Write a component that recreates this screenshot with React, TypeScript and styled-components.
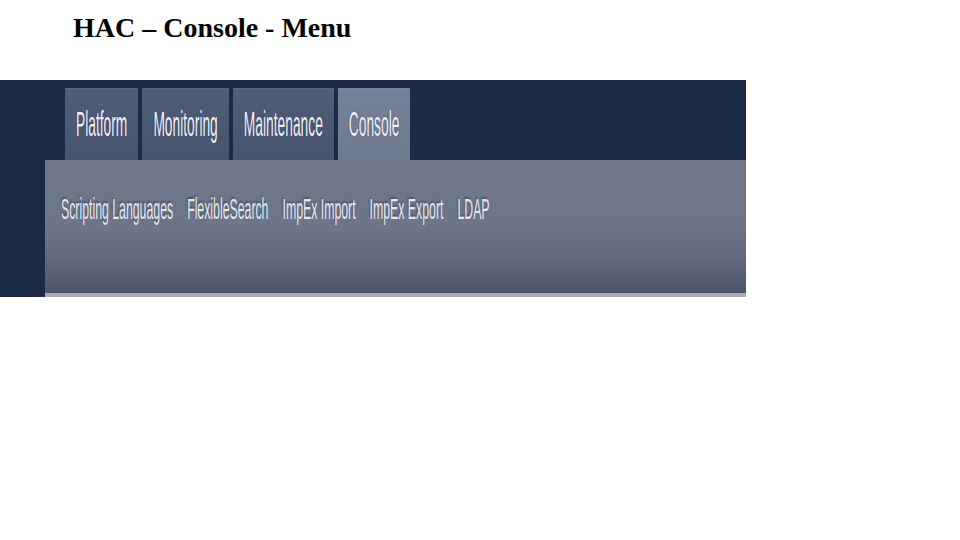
import { styled, createGlobalStyle } from "styled-components";

const GlobalStyle = createGlobalStyle`
  html, body {
    margin: 0;
    padding: 0;
    background: #ffffff;
  }
`;

const Page = styled.div`
  width: 960px;
  height: 540px;
  overflow: hidden;
  background: #ffffff;
`;

const Title = styled.h1`
  margin: 12px 0 0;
  padding-left: 73px;
  font-family: "Liberation Serif", "Times New Roman", serif;
  font-weight: bold;
  font-size: 28px;
  line-height: 32px;
  color: #000000;
`;

const Band = styled.div`
  margin-top: 36px;
  width: 746px;
  height: 217px;
  background: #1b2a45;
  display: flex;
  flex-direction: column;
`;

const TabRow = styled.div`
  display: flex;
  flex-shrink: 0;
  gap: 4px;
  padding: 8px 0 0 65px;
  height: 72px;
`;

const Tab = styled.div<{ $active?: boolean }>`
  display: flex;
  align-items: center;
  padding: 0 11px;
  background: ${(p) =>
    p.$active
      ? "linear-gradient(#76809a, #6f798d)"
      : "linear-gradient(#515e78, #47546d)"};
  box-shadow: inset 0 1px 0 rgba(255, 255, 255, 0.06);
`;

/* the menu font in the shot is very condensed: small size, stretched up */
const TallText = styled.span<{ $size: number; $stretch: number }>`
  display: inline-block;
  font-family: "Liberation Sans", Arial, sans-serif;
  font-size: ${(p) => p.$size}px;
  white-space: nowrap;
  color: #eef1f7;
  transform: scaleY(${(p) => p.$stretch});
  text-shadow: 0 0 1px rgba(20, 30, 50, 0.5);
`;

const Panel = styled.div`
  flex-shrink: 0;
  margin-left: 45px;
  height: 98px;
  width: 685px;
  padding: 35px 0 0 16px;
  border-bottom: 4px solid #a9abb1;
  background: linear-gradient(
    #6e7788 0%,
    #6d7687 50%,
    #5f697b 75%,
    #4b5568 100%
  );
`;

const SubRow = styled.div`
  display: flex;
  align-items: center;
  gap: 14px;
  height: 30px;
`;

const SubItem = styled(TallText)`
  color: #e3e7ee;
  text-shadow: -1px -1px 1px rgba(40, 48, 64, 0.45);
`;

const tabs = ["Platform", "Monitoring", "Maintenance", "Console"];
const subItems = [
  "Scripting Languages",
  "FlexibleSearch",
  "ImpEx Import",
  "ImpEx Export",
  "LDAP",
];

const App = () => (
  <Page>
    <GlobalStyle />
    <Title>HAC – Console - Menu</Title>
    <Band>
      <TabRow>
        {tabs.map((t) => (
          <Tab key={t} $active={t === "Console"}>
            <TallText $size={13.8} $stretch={2.5}>
              {t}
            </TallText>
          </Tab>
        ))}
      </TabRow>
      <Panel>
        <SubRow>
          {subItems.map((s) => (
            <SubItem key={s} $size={12.3} $stretch={2.35}>
              {s}
            </SubItem>
          ))}
        </SubRow>
      </Panel>
    </Band>
  </Page>
);

export default App;
